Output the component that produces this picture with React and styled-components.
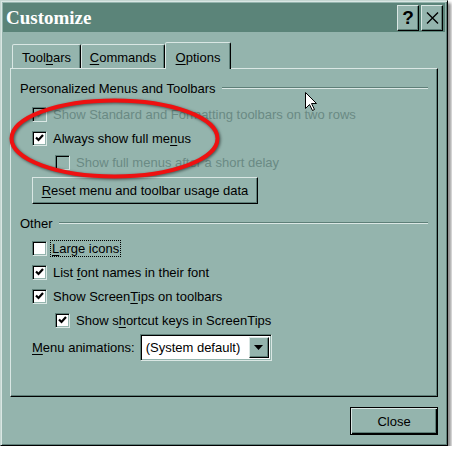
import React from 'react';
import styled, { createGlobalStyle } from 'styled-components';

const FACE = '#94b4ad';
const HILITE = '#dae7e4';
const SHADOW = '#5e7f78';
const DARK = '#000';
const GRAYTEXT = '#6a8a84';

const GlobalStyle = createGlobalStyle`
  html, body {
    margin: 0;
    padding: 0;
    background: #fff;
  }
  body {
    font-family: "Liberation Sans", Arial, sans-serif;
    font-size: 13px;
    color: #000;
  }
`;

const Window = styled.div`
  position: relative;
  box-sizing: border-box;
  width: 448px;
  height: 446px;
  background: ${FACE};
  border: 1px solid;
  border-color: #c4d6d1 ${DARK} ${DARK} #c4d6d1;
  padding: 2px;
  box-shadow: inset 1px 1px ${HILITE}, inset -1px -1px ${SHADOW},
    3px 3px 3px rgba(0, 0, 0, 0.45);
  display: flex;
  flex-direction: column;
`;

const TitleBar = styled.div`
  height: 29px;
  background: #5b8479;
  display: flex;
  align-items: center;
  padding: 0 2px 0 3px;
`;

const Title = styled.div`
  flex: 1;
  font-family: "Liberation Serif", "Times New Roman", serif;
  font-weight: bold;
  font-size: 19px;
  color: #fff;
`;

const TitleButtons = styled.div`
  display: flex;
  gap: 2px;
`;

const TitleBtn = styled.div`
  box-sizing: border-box;
  width: 22px;
  height: 26px;
  background: ${FACE};
  border: 1px solid;
  border-color: ${HILITE} ${DARK} ${DARK} ${HILITE};
  box-shadow: inset -1px -1px ${SHADOW};
  display: flex;
  align-items: center;
  justify-content: center;
  font-weight: bold;
  font-size: 19px;
  line-height: 1;
`;

const Body = styled.div`
  flex: 1;
  display: flex;
  flex-direction: column;
  padding: 10px 7px 8px;
`;

const TabStrip = styled.div`
  height: 26px;
  display: flex;
  align-items: flex-end;
  padding-left: 2px;
  position: relative;
  z-index: 1;
`;

const Tab = styled.div`
  box-sizing: border-box;
  width: ${(p) => p.$w}px;
  height: ${(p) => (p.$active ? 27 : 24)}px;
  margin-bottom: ${(p) => (p.$active ? -1 : 0)}px;
  padding-top: 2px;
  background: ${FACE};
  border: 1px solid;
  border-bottom: none;
  border-color: ${HILITE} ${DARK} transparent ${HILITE};
  border-radius: 2px 2px 0 0;
  box-shadow: inset -1px 0 ${SHADOW};
  display: flex;
  align-items: center;
  justify-content: center;
  white-space: nowrap;
`;

const Panel = styled.div`
  box-sizing: border-box;
  height: 329px;
  border: 1px solid;
  border-color: ${HILITE} ${DARK} ${DARK} ${HILITE};
  box-shadow: inset -1px -1px ${SHADOW};
  padding: 11px 9px 0;
  display: flex;
  flex-direction: column;
`;

const GroupHeader = styled.div`
  display: flex;
  align-items: center;
  height: 16px;
  gap: 6px;
  margin-top: ${(p) => p.$top || 0}px;

  &::after {
    content: '';
    flex: 1;
    border-top: 1px solid ${SHADOW};
    border-bottom: 1px solid ${HILITE};
  }
`;

const Row = styled.div`
  display: flex;
  align-items: center;
  height: 24px;
  gap: 6px;
  padding-left: ${(p) => (p.$indent ? 35 : 12)}px;
  margin-top: ${(p) => p.$top || 0}px;
  color: ${(p) => (p.$disabled ? GRAYTEXT : '#000')};
  white-space: nowrap;
`;

const Box = styled.div`
  box-sizing: border-box;
  width: 15px;
  height: 15px;
  border: 1px solid;
  border-color: ${SHADOW} ${HILITE} ${HILITE} ${SHADOW};
  box-shadow: inset 1px 1px ${DARK}, inset -1px -1px ${FACE};
  background: ${(p) => (p.$disabled ? FACE : '#fff')};
  display: flex;
  align-items: center;
  justify-content: center;
  flex: none;
`;

const Focus = styled.span`
  outline: 1px dotted #000;
  outline-offset: 0;
  padding: 0 1px;
  margin-left: -2px;
`;

const Mn = styled.span`
  text-decoration: underline;
  text-underline-offset: 2px;
`;

const Button = styled.div`
  box-sizing: border-box;
  align-self: flex-start;
  width: ${(p) => p.$w}px;
  height: ${(p) => p.$h}px;
  margin-left: ${(p) => p.$left || 0}px;
  margin-top: ${(p) => p.$top || 0}px;
  background: ${FACE};
  border: 1px solid;
  border-color: ${HILITE} ${DARK} ${DARK} ${HILITE};
  box-shadow: inset -1px -1px ${SHADOW};
  display: flex;
  align-items: center;
  justify-content: center;
  white-space: nowrap;
`;

const ComboRow = styled.div`
  display: flex;
  align-items: center;
  height: 27px;
  gap: 5px;
  padding-left: 12px;
  margin-top: 2px;
`;

const Combo = styled.div`
  box-sizing: border-box;
  width: 132px;
  height: 27px;
  background: #fff;
  border: 1px solid;
  border-color: ${SHADOW} ${HILITE} ${HILITE} ${SHADOW};
  box-shadow: inset 1px 1px ${DARK}, inset -1px -1px ${FACE};
  display: flex;
  align-items: center;
  padding: 2px;
  padding-left: 5px;
`;

const DropBtn = styled.div`
  box-sizing: border-box;
  margin-left: auto;
  width: 20px;
  height: 21px;
  background: ${FACE};
  border: 1px solid;
  border-color: ${HILITE} ${DARK} ${DARK} ${HILITE};
  box-shadow: inset -1px -1px ${SHADOW};
  display: flex;
  align-items: center;
  justify-content: center;
`;

const Footer = styled.div`
  display: flex;
  justify-content: flex-end;
  margin-top: 10px;
`;

const DefaultButton = styled.div`
  box-sizing: border-box;
  width: 88px;
  height: 28px;
  background: ${FACE};
  border: 1px solid ${DARK};
  box-shadow: inset 1px 1px ${HILITE}, inset -1px -1px ${DARK},
    inset -2px -2px ${SHADOW};
  display: flex;
  align-items: center;
  justify-content: center;
`;

const Overlay = styled.svg`
  position: absolute;
  pointer-events: none;
  overflow: visible;
`;

const Check = ({ color = '#000' }) => (
  <svg width="9" height="8" viewBox="0 0 9 8">
    <path d="M1 3.5 L3.5 6 L8 1" fill="none" stroke={color} strokeWidth="2.2" />
  </svg>
);

const CheckRow = ({ checked, disabled, indent, top, children }) => (
  <Row $indent={indent} $disabled={disabled} $top={top}>
    <Box $disabled={disabled}>{checked && <Check color={disabled ? GRAYTEXT : '#000'} />}</Box>
    <span>{children}</span>
  </Row>
);

const App = () => {
  return (
    <>
      <GlobalStyle />
      <Window>
        <TitleBar>
          <Title>Customize</Title>
          <TitleButtons>
            <TitleBtn>?</TitleBtn>
            <TitleBtn>
              <svg width="13" height="12" viewBox="0 0 13 12">
                <path d="M1 0.5 L12 11.5 M12 0.5 L1 11.5" stroke="#000" strokeWidth="1.4" />
              </svg>
            </TitleBtn>
          </TitleButtons>
        </TitleBar>

        <Body>
          <TabStrip>
            <Tab $w={69}>
              Tool<Mn>b</Mn>ars
            </Tab>
            <Tab $w={84}>
              <Mn>C</Mn>ommands
            </Tab>
            <Tab $w={66} $active>
              <Mn>O</Mn>ptions
            </Tab>
          </TabStrip>

          <Panel>
            <GroupHeader>Personalized Menus and Toolbars</GroupHeader>
            <CheckRow checked disabled top={6}>
              Show Standard and Formatting toolbars on two rows
            </CheckRow>
            <CheckRow checked>
              Always show full me<Mn>n</Mn>us
            </CheckRow>
            <CheckRow disabled indent>
              Show full menus after a short delay
            </CheckRow>
            <Button $w={226} $h={27} $left={12} $top={3}>
              <span>
                <Mn>R</Mn>eset menu and toolbar usage data
              </span>
            </Button>

            <GroupHeader $top={11}>Other</GroupHeader>
            <CheckRow top={5}>
              <Focus>
                <Mn>L</Mn>arge icons
              </Focus>
            </CheckRow>
            <CheckRow checked>
              List <Mn>f</Mn>ont names in their font
            </CheckRow>
            <CheckRow checked>
              Show Screen<Mn>T</Mn>ips on toolbars
            </CheckRow>
            <CheckRow checked indent>
              Show s<Mn>h</Mn>ortcut keys in ScreenTips
            </CheckRow>
            <ComboRow>
              <span>
                <Mn>M</Mn>enu animations:
              </span>
              <Combo>
                <span>(System default)</span>
                <DropBtn>
                  <svg width="9" height="5" viewBox="0 0 9 5">
                    <path d="M0 0 H9 L4.5 5 Z" fill="#000" />
                  </svg>
                </DropBtn>
              </Combo>
            </ComboRow>
          </Panel>

          <Footer>
            <DefaultButton>Close</DefaultButton>
          </Footer>
        </Body>

        <Overlay
          style={{ left: 0, top: 89, filter: 'drop-shadow(1px 1px 1.5px rgba(0,0,0,0.55))' }}
          width="240"
          height="100"
        >
          <ellipse cx="113.5" cy="48.5" rx="103" ry="38" fill="none" stroke="#ee1111" strokeWidth="4" />
        </Overlay>

        <Overlay style={{ left: 304, top: 91 }} width="13" height="20">
          <path
            d="M0.5 0.5 L0.5 16.5 L4.5 12.5 L7.5 18.5 L9.5 17.5 L6.5 11.5 L11.5 11.5 Z"
            fill="#fff"
            stroke="#000"
            strokeWidth="1"
          />
        </Overlay>
      </Window>
    </>
  );
};

export default App;
